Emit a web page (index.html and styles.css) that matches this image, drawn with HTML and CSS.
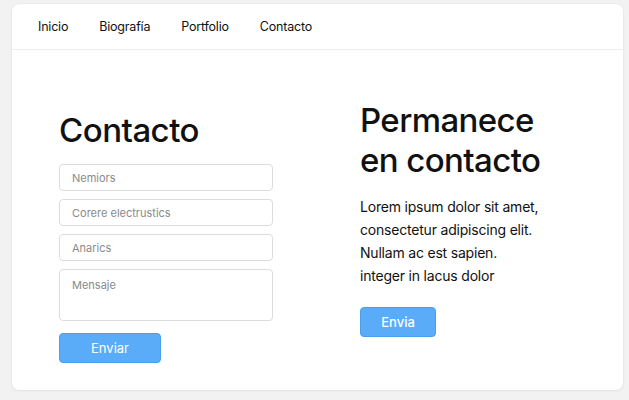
FILE: index.html
```html
<!DOCTYPE html>
<html lang="es">
<head>
<meta charset="utf-8">
<title>Contacto</title>
<link rel="stylesheet" href="styles.css">
</head>
<body>
<div class="card">
  <nav class="nav">
    <a href="#">Inicio</a>
    <a href="#">Biografía</a>
    <a href="#">Portfolio</a>
    <a href="#">Contacto</a>
  </nav>
  <main class="main">
    <section class="left">
      <h1 class="title-left">Contacto</h1>
      <form class="form">
        <input class="field" type="text" placeholder="Nemiors">
        <input class="field" type="text" placeholder="Corere electrustics">
        <input class="field" type="text" placeholder="Anarics">
        <textarea class="field area" placeholder="Mensaje"></textarea>
        <button type="button" class="btn btn-send">Enviar</button>
      </form>
    </section>
    <section class="right">
      <h2 class="title-right">Permanece<br>en contacto</h2>
      <p class="text">Lorem ipsum dolor sit amet,<br>consectetur adipiscing elit.<br>Nullam ac est sapien.<br>integer in lacus dolor</p>
      <button type="button" class="btn btn-envia">Envia</button>
    </section>
  </main>
</div>
</body>
</html>
```
FILE: styles.css
```css
* { box-sizing: border-box; }
html, body { margin: 0; padding: 0; }
body {
  background: #f2f2f2;
  font-family: Inter, "Liberation Sans", sans-serif;
  color: #111;
  padding: 4px 6px 10px 12px;
}
.card {
  width: 611px;
  height: 386px;
  background: #fff;
  border-radius: 7px;
  box-shadow: 0 0 2px rgba(0,0,0,0.08), 0 1px 3px rgba(0,0,0,0.05);
  overflow: hidden;
}
.nav {
  height: 46px;
  border-bottom: 1px solid #ececec;
  display: flex;
  align-items: center;
  padding-left: 26px;
  gap: 31px;
}
.nav a {
  font-size: 12.5px;
  letter-spacing: -0.2px;
  color: #111;
  text-decoration: none;
}
.main {
  display: flex;
  padding: 50px 0 0 47px;
}
.left { width: 301px; }
.title-left {
  margin: 10px 0 14px;
  font-size: 33px;
  line-height: 40px;
  font-weight: 500;
  letter-spacing: -0.5px;
}
.form {
  display: flex;
  flex-direction: column;
  gap: 8px;
  width: 214px;
}
.field {
  display: block;
  width: 214px;
  height: 27px;
  border: 1px solid #dcdcdc;
  border-radius: 4px;
  padding: 0 12px;
  font-family: inherit;
  font-size: 11px;
  color: #333;
  background: #fff;
}
.field::placeholder { color: #8a8a8a; }
.area {
  height: 52px;
  padding-top: 8px;
  resize: none;
}
.btn {
  font-family: inherit;
  font-size: 13px;
  color: #fff;
  background: #5aabf8;
  border: 1px solid #4a9ef0;
  border-radius: 4px;
  height: 30px;
  padding: 0;
}
.btn-send {
  width: 102px;
  margin-top: 4px;
}
.right { width: 220px; }
.title-right {
  margin: 0;
  font-size: 33px;
  line-height: 40px;
  font-weight: 500;
  letter-spacing: -0.6px;
}
.text {
  margin: 15px 0 20px;
  font-size: 14px;
  line-height: 23px;
  letter-spacing: -0.2px;
  color: #111;
}
.btn-envia {
  width: 76px;
  display: block;
  font-weight: 500;
}
```
